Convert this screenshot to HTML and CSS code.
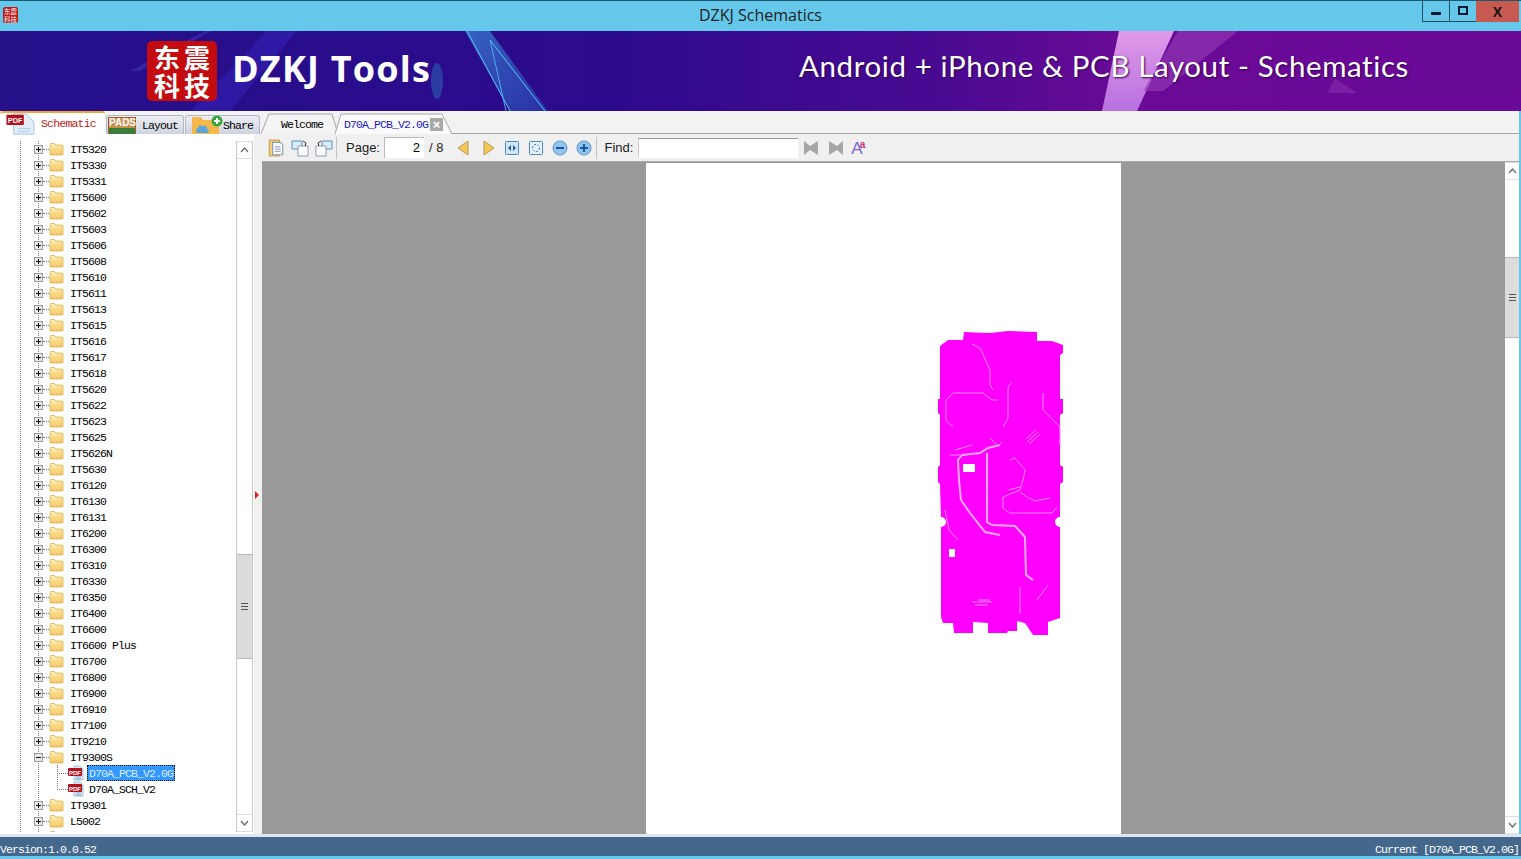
FILE: index.html
```html
<!DOCTYPE html>
<html>

<head>
    <title>DZKJ Schematics</title>
    <link rel="stylesheet" href="styles.css">
</head>

<body>
    <svg class="defs" width="0" height="0">
        <defs>
            <linearGradient id="gradFolder" x1="0" y1="0" x2="0" y2="1">
                <stop offset="0" stop-color="#fdeeb4" />
                <stop offset="1" stop-color="#f3c65e" />
            </linearGradient>
            <symbol id="folder" viewBox="0 0 15 14">
                <path d="M1 12.500V2.500q0-1 1-1h3.500l1.500 1.500h6q1 0 1 1v8.500q0 .5-1 .5H2q-1 0-1-.5z" fill="url(#gradFolder)" stroke="#dcb055" stroke-width=".8" />
            </symbol>
            <symbol id="pdf" viewBox="0 0 16 16">
                <path d="M6 1h6l3 3v11H6z" fill="#dbe9f5" stroke="#8fb4d0" stroke-width=".8" />
                <path d="M8 12h5M8 14h5" stroke="#7fb0d8" />
                <rect x="0" y="3" width="14" height="8" rx="1" fill="#b3121d" />
                <text x="7" y="9.500" class="pdfTiny">PDF</text>
            </symbol>
            <symbol id="page" viewBox="0 0 16 16">
                <path d="M5 3h7l2 2v9H5z" fill="#fbfbfb" stroke="#8d9bb0" />
                <path d="M7 7h5M7 9h5M7 11h5" stroke="#9fb0c8" />
            </symbol>
        </defs>
    </svg>

    <div class="window">
        <div class="titlebar">
            <div class="appIcon">东震<br>科技</div>
            <div class="titleText">DZKJ Schematics</div>
            <div class="winButtons">
                <div class="winBtn"><span class="icoMin"></span></div>
                <div class="winBtn"><span class="icoMax"></span></div>
                <div class="winBtn winClose">X</div>
            </div>
        </div>

        <div class="banner">
            <svg class="bannerArt" viewBox="0 0 1521 80" preserveAspectRatio="none">
                <defs>
                    <linearGradient id="gradBanner" x1="0" y1="0" x2="1" y2="0">
                        <stop offset="0" stop-color="#25108a" />
                        <stop offset=".4" stop-color="#2c0a8c" />
                        <stop offset=".62" stop-color="#4a0a92" />
                        <stop offset=".74" stop-color="#6a0a96" />
                        <stop offset="1" stop-color="#6a0898" />
                    </linearGradient>
                    <linearGradient id="gradRibbon" x1="0" y1="0" x2="1" y2="1">
                        <stop offset="0" stop-color="#3a86d8" />
                        <stop offset="1" stop-color="#2a40b0" />
                    </linearGradient>
                    <linearGradient id="gradPink" x1="0" y1="0" x2="0" y2="1">
                        <stop offset="0" stop-color="#e09ae8" />
                        <stop offset="1" stop-color="#b870e0" />
                    </linearGradient>
                </defs>
                <rect width="1521" height="80" fill="url(#gradBanner)" />
                <path d="M190 80L267 0h30L230 80z" fill="#3420b4" opacity=".6" />
                <path d="M130 40L205 0h6L140 40z" fill="#4a40c0" opacity=".4" />
                <path d="M465 0h25l58 80h-38z" fill="url(#gradRibbon)" opacity=".7" />
                <path d="M467 0l43 80M490 9l55 71" stroke="#55c8ee" fill="none" />
                <path d="M490 9l16 71" stroke="#55a8ee" fill="none" />
                <ellipse cx="437" cy="50" rx="6" ry="18" fill="#2e9ad0" opacity=".35" />
                <path d="M1119 0h55l-37 80h-35z" fill="url(#gradPink)" />
                <path d="M1178 0h60l-75 60h-20z" fill="#9a3cb8" opacity=".6" />
                <path d="M1335 47l22 15h-30z" fill="#8a2cac" opacity=".6" />
            </svg>
            <div class="logo">
                <span>东</span><span>震</span><span>科</span><span>技</span>
            </div>
            <div class="brand">DZKJ Tools</div>
            <div class="tagline">Android + iPhone &amp; PCB Layout - Schematics</div>
        </div>

        <div class="main">
            <div class="leftPane">
                <div class="leftTabs">
                    <div class="leftTab leftTabActive">
                        <svg class="tabIcoPdf" viewBox="0 0 34 24" width="34" height="22">
                            <path d="M8 1h14l8 9v13H8z" fill="#e4eef8" stroke="#9fc0dc" />
                            <path d="M12 17h14M12 20h14" stroke="#a8cbe6" />
                            <rect x="0" y="2" width="19" height="11" rx="1" fill="#b3121d" />
                            <text x="9.500" y="11" class="pdfLabel">PDF</text>
                        </svg>
                        <span class="tabLabel">Schematic</span>
                    </div>
                    <div class="leftTab leftTabLayout">
                        <div class="padsIcon">PADS</div>
                        <span class="tabLabel">Layout</span>
                    </div>
                    <div class="leftTab leftTabShare">
                        <svg viewBox="0 0 32 20" width="32" height="20">
                            <path d="M1 19V3q0-1 1-1h8l2 3h16v14z" fill="#f6b84a" />
                            <path d="M6 18q-3-3 1-5 1-4 5-2 4-1 4 3 3 1 1 4z" fill="#5aa8e0" />
                            <circle cx="26" cy="6" r="5.500" fill="#3aa53a" />
                            <path d="M23 6h6M26 3v6" stroke="#fff" stroke-width="2" />
                        </svg>
                        <span class="tabLabel">Share</span>
                    </div>
                </div>

                <div class="leftBody">
                    <div class="tree">
                        <div class="treeList">
                            <div class="row"><i class="exp"></i><svg class="fold"><use href="#folder" /></svg><span class="lbl">IT5320</span></div>
                            <div class="row"><i class="exp"></i><svg class="fold"><use href="#folder" /></svg><span class="lbl">IT5330</span></div>
                            <div class="row"><i class="exp"></i><svg class="fold"><use href="#folder" /></svg><span class="lbl">IT5331</span></div>
                            <div class="row"><i class="exp"></i><svg class="fold"><use href="#folder" /></svg><span class="lbl">IT5600</span></div>
                            <div class="row"><i class="exp"></i><svg class="fold"><use href="#folder" /></svg><span class="lbl">IT5602</span></div>
                            <div class="row"><i class="exp"></i><svg class="fold"><use href="#folder" /></svg><span class="lbl">IT5603</span></div>
                            <div class="row"><i class="exp"></i><svg class="fold"><use href="#folder" /></svg><span class="lbl">IT5606</span></div>
                            <div class="row"><i class="exp"></i><svg class="fold"><use href="#folder" /></svg><span class="lbl">IT5608</span></div>
                            <div class="row"><i class="exp"></i><svg class="fold"><use href="#folder" /></svg><span class="lbl">IT5610</span></div>
                            <div class="row"><i class="exp"></i><svg class="fold"><use href="#folder" /></svg><span class="lbl">IT5611</span></div>
                            <div class="row"><i class="exp"></i><svg class="fold"><use href="#folder" /></svg><span class="lbl">IT5613</span></div>
                            <div class="row"><i class="exp"></i><svg class="fold"><use href="#folder" /></svg><span class="lbl">IT5615</span></div>
                            <div class="row"><i class="exp"></i><svg class="fold"><use href="#folder" /></svg><span class="lbl">IT5616</span></div>
                            <div class="row"><i class="exp"></i><svg class="fold"><use href="#folder" /></svg><span class="lbl">IT5617</span></div>
                            <div class="row"><i class="exp"></i><svg class="fold"><use href="#folder" /></svg><span class="lbl">IT5618</span></div>
                            <div class="row"><i class="exp"></i><svg class="fold"><use href="#folder" /></svg><span class="lbl">IT5620</span></div>
                            <div class="row"><i class="exp"></i><svg class="fold"><use href="#folder" /></svg><span class="lbl">IT5622</span></div>
                            <div class="row"><i class="exp"></i><svg class="fold"><use href="#folder" /></svg><span class="lbl">IT5623</span></div>
                            <div class="row"><i class="exp"></i><svg class="fold"><use href="#folder" /></svg><span class="lbl">IT5625</span></div>
                            <div class="row"><i class="exp"></i><svg class="fold"><use href="#folder" /></svg><span class="lbl">IT5626N</span></div>
                            <div class="row"><i class="exp"></i><svg class="fold"><use href="#folder" /></svg><span class="lbl">IT5630</span></div>
                            <div class="row"><i class="exp"></i><svg class="fold"><use href="#folder" /></svg><span class="lbl">IT6120</span></div>
                            <div class="row"><i class="exp"></i><svg class="fold"><use href="#folder" /></svg><span class="lbl">IT6130</span></div>
                            <div class="row"><i class="exp"></i><svg class="fold"><use href="#folder" /></svg><span class="lbl">IT6131</span></div>
                            <div class="row"><i class="exp"></i><svg class="fold"><use href="#folder" /></svg><span class="lbl">IT6200</span></div>
                            <div class="row"><i class="exp"></i><svg class="fold"><use href="#folder" /></svg><span class="lbl">IT6300</span></div>
                            <div class="row"><i class="exp"></i><svg class="fold"><use href="#folder" /></svg><span class="lbl">IT6310</span></div>
                            <div class="row"><i class="exp"></i><svg class="fold"><use href="#folder" /></svg><span class="lbl">IT6330</span></div>
                            <div class="row"><i class="exp"></i><svg class="fold"><use href="#folder" /></svg><span class="lbl">IT6350</span></div>
                            <div class="row"><i class="exp"></i><svg class="fold"><use href="#folder" /></svg><span class="lbl">IT6400</span></div>
                            <div class="row"><i class="exp"></i><svg class="fold"><use href="#folder" /></svg><span class="lbl">IT6600</span></div>
                            <div class="row"><i class="exp"></i><svg class="fold"><use href="#folder" /></svg><span class="lbl">IT6600 Plus</span></div>
                            <div class="row"><i class="exp"></i><svg class="fold"><use href="#folder" /></svg><span class="lbl">IT6700</span></div>
                            <div class="row"><i class="exp"></i><svg class="fold"><use href="#folder" /></svg><span class="lbl">IT6800</span></div>
                            <div class="row"><i class="exp"></i><svg class="fold"><use href="#folder" /></svg><span class="lbl">IT6900</span></div>
                            <div class="row"><i class="exp"></i><svg class="fold"><use href="#folder" /></svg><span class="lbl">IT6910</span></div>
                            <div class="row"><i class="exp"></i><svg class="fold"><use href="#folder" /></svg><span class="lbl">IT7100</span></div>
                            <div class="row"><i class="exp"></i><svg class="fold"><use href="#folder" /></svg><span class="lbl">IT9210</span></div>
                            <div class="row"><i class="exp expOpen"></i><svg class="fold"><use href="#folder" /></svg><span class="lbl">IT9300S</span></div>
                            <div class="row rowChild"><svg class="pdfIco"><use href="#pdf" /></svg><span class="lbl lblChild lblSelected">D70A_PCB_V2.0G</span></div>
                            <div class="row rowChild rowChildLast"><svg class="pdfIco"><use href="#pdf" /></svg><span class="lbl lblChild">D70A_SCH_V2</span></div>
                            <div class="row"><i class="exp"></i><svg class="fold"><use href="#folder" /></svg><span class="lbl">IT9301</span></div>
                            <div class="row"><i class="exp"></i><svg class="fold"><use href="#folder" /></svg><span class="lbl">L5002</span></div>
                            <div class="row"><i class="exp"></i><svg class="fold"><use href="#folder" /></svg></div>
                        </div>
                        <div class="scrollbar treeScroll">
                            <div class="sbBtn"><svg width="9" height="6" viewBox="0 0 9 6"><path d="M1 5l3.500-4L8 5" class="sbArrow" /></svg></div>
                            <div class="sbTrack">
                                <div class="sbThumb treeThumb"><span class="grip"></span></div>
                            </div>
                            <div class="sbBtn"><svg width="9" height="6" viewBox="0 0 9 6"><path d="M1 1l3.500 4L8 1" class="sbArrow" /></svg></div>
                        </div>
                    </div>
                    <div class="splitter"><span class="splitArrow"></span></div>
                </div>
            </div>

            <div class="rightPane">
                <div class="docTabs">
                    <div class="docTab docTabWelcome">
                        <svg class="tabShape" viewBox="0 0 78 21" preserveAspectRatio="none">
                            <path d="M0 21L8 1h63l6 20" fill="#f4f4f4" stroke="#a6a6a6" />
                        </svg>
                        <span>Welcome</span>
                    </div>
                    <div class="docTab docTabActive">
                        <svg class="tabShape" viewBox="0 0 118 21" preserveAspectRatio="none">
                            <path d="M0 21L6 1h101l10 20" fill="#fafafa" stroke="#a6a6a6" />
                        </svg>
                        <span>D70A_PCB_V2.0G</span>
                        <span class="docClose">×</span>
                    </div>
                </div>

                <div class="toolbar">
                    <svg class="tool" viewBox="0 0 16 16"><rect x="2" y="1" width="9" height="14" fill="#f0cf80" stroke="#c9a050" /><use href="#page" /></svg>
                    <svg class="tool" viewBox="0 0 18 18"><path d="M1 2h10v8H1z" fill="#d8ecfb" stroke="#5d8fb8" /><path d="M7 7h10v10H7z" fill="#fff" stroke="#8d9bb0" /><path d="M12 2l3 2-1 3" fill="none" stroke="#333" /></svg>
                    <svg class="tool" viewBox="0 0 18 18"><path d="M7 2h10v8H7z" fill="#d8ecfb" stroke="#5d8fb8" /><path d="M1 7h10v10H1z" fill="#fff" stroke="#8d9bb0" /><path d="M6 2L3 4l1 3" fill="none" stroke="#333" /></svg>
                    <span class="toolSep sepFirst"></span>
                    <span class="toolText pageLabel">Page:</span>
                    <div class="pageInput">2</div>
                    <span class="toolText pageTotal">/ 8</span>
                    <svg class="navTri triPrev" viewBox="0 0 14 16"><path d="M12 1v14L2 8z" fill="#f3c456" stroke="#b59a50" /></svg>
                    <svg class="navTri triNext" viewBox="0 0 14 16"><path d="M2 1v14l10-7z" fill="#f3c456" stroke="#b59a50" /></svg>
                    <svg class="tool toolFit" viewBox="0 0 14 14"><rect x=".5" y=".5" width="13" height="13" rx="1" fill="#cfe6fa" stroke="#4a86c0" /><path d="M6 4v6L3 7zM8 4v6l3-3z" fill="#1f5f9f" /></svg>
                    <svg class="tool toolFit" viewBox="0 0 14 14"><rect x=".5" y=".5" width="13" height="13" rx="1" fill="#e6f2fc" stroke="#4a86c0" /><circle cx="7" cy="7" r="3.500" fill="none" stroke="#3a7ab5" stroke-dasharray="2 1.500" /></svg>
                    <svg class="tool toolZoom" viewBox="0 0 16 16"><circle cx="8" cy="8" r="7" fill="#8ec4ee" stroke="#5a90c0" /><path d="M4 8h8" stroke="#1f5590" stroke-width="2" /></svg>
                    <svg class="tool toolZoom" viewBox="0 0 16 16"><circle cx="8" cy="8" r="7" fill="#8ec4ee" stroke="#5a90c0" /><path d="M4 8h8M8 4v8" stroke="#1f5590" stroke-width="2" /></svg>
                    <span class="toolSep sepSecond"></span>
                    <span class="toolText findLabel">Find:</span>
                    <div class="findInput"></div>
                    <svg class="tool toolFindPrev" viewBox="0 0 16 16"><path d="M1 1l6 5 8-5v14l-8-5-6 5z" fill="#a6a6a6" /></svg>
                    <svg class="tool toolFindNext" viewBox="0 0 16 16"><path d="M15 1l-6 5-8-5v14l8-5 6 5z" fill="#a6a6a6" /></svg>
                    <div class="fontIcon"><span class="fontBig">A</span><span class="fontSmall">a</span></div>
                </div>

                <div class="viewer">
                    <div class="canvas">
                        <div class="pdfPage">
                            <svg class="pcb" viewBox="646 163 475 671">
                                <path class="pcbBody" d="M964 332L990 333L1008 331L1037 332L1037 341L1052 341L1063 345L1063 353L1060 355L1060 399L1063 399L1063 413L1060 415L1060 465L1063 467L1063 482L1060 484L1060 517A5 5 0 0 0 1060 527L1060 618L1048 622L1048 635L1033 635L1025 623L1017 621L1017 631L1008 631L1007 633L988 633L988 623L973 622L973 633L954 633L953 623L943 623L941 617L941 527A5 5 0 0 0 941 517L940 484L938 482L938 467L940 465L940 415L938 413L938 399L940 399L940 346L948 340L963 340z" />
                                <rect class="pcbHole" x="963" y="464" width="12" height="8" />
                                <rect class="pcbHole" x="949" y="549" width="6" height="8" />
                                <path class="traceWide" d="M1000 445L988 448L980 453L962 455L958 460L959 480L961 500L970 513L985 532L1000 535" />
                                <path class="traceWide" d="M987 453V522L992 525L1015 526L1025 537L1026 575L1033 580" />
                                <path class="traceThin" d="M998 400H992L983 393H953L946 400V420L950 425L953 426" />
                                <path class="traceThin" d="M972 344L980 348L990 370V385L993 390" />
                                <path class="traceThin" d="M1012 382L1008 387V418L1003 427" />
                                <path class="traceThin" d="M1043 393V410L1060 427V445" />
                                <path class="traceThin" d="M1027 442L1038 432M1029 444L1040 434M1026 439L1036 430" />
                                <path class="traceThin" d="M1010 460L1015 458L1025 470L1023 480L1020 490L1003 497V508L1010 513H1052L1057 507" />
                                <path class="traceThin" d="M1027 497L1035 501L1050 498M1008 490L1020 487M1020 492L1027 497" />
                                <path class="traceThin" d="M960 455H950M955 450L972 445M945 510L949 530L958 540" />
                                <path class="traceThin" d="M972 602H992M978 600H990M975 605H988" />
                                <path class="traceThin" d="M1020 587V613M1037 600L1048 585" />
                                <path class="traceThin" d="M990 438L998 446L1002 442" />
                            </svg>
                        </div>
                    </div>
                    <div class="scrollbar viewerScroll">
                        <div class="sbBtn"><svg width="9" height="6" viewBox="0 0 9 6"><path d="M1 5l3.500-4L8 5" class="sbArrow" /></svg></div>
                        <div class="sbTrack">
                            <div class="sbThumb viewerThumb"><span class="grip"></span></div>
                        </div>
                        <div class="sbBtn"><svg width="9" height="6" viewBox="0 0 9 6"><path d="M1 1l3.500 4L8 1" class="sbArrow" /></svg></div>
                    </div>
                </div>
            </div>
        </div>

        <div class="statusbar">
            <span>Version:1.0.0.52</span>
            <span>Current [D70A_PCB_V2.0G]</span>
        </div>
    </div>
</body>

</html>
```
FILE: styles.css
```css
html,
body {
    margin: 0;
    padding: 0;
}

body {
    width: 1521px;
    height: 859px;
    overflow: hidden;
    font-family: "Liberation Mono", monospace;
    font-size: 11.500px;
    letter-spacing: -0.9px;
    color: #000;
}

.defs {
    position: absolute;
}

.window {
    display: flex;
    flex-direction: column;
    height: 859px;
    background-color: #65c8ea;
}

/* title */

.titlebar {
    display: grid;
    grid-template-columns: 1fr auto 1fr;
    height: 31px;
    box-sizing: border-box;
    border-top: 1px solid #1d5a72;
    flex-shrink: 0;
}

.appIcon {
    width: 15px;
    height: 16px;
    margin: 6px 0 0 3px;
    background-color: #b81818;
    border-radius: 2px;
    color: #fff;
    font-family: "Noto Sans CJK SC", sans-serif;
    font-size: 6.500px;
    line-height: 8px;
    letter-spacing: 0;
    text-align: center;
}

.titleText {
    font-family: "Open Sans", sans-serif;
    font-size: 16px;
    line-height: 29px;
    letter-spacing: 0;
    color: #222;
}

.winButtons {
    display: flex;
    justify-content: flex-end;
    height: 21px;
    padding-right: 2px;
}

.winBtn {
    display: flex;
    align-items: center;
    justify-content: center;
    width: 26px;
    height: 20px;
    border-left: 1px solid #1f4f66;
    border-bottom: 1px solid #1f4f66;
}

.winClose {
    width: 43px;
    border-left: 0;
    border-bottom: 0;
    height: 21px;
    background-color: #c75a50;
    font-family: "Liberation Sans", sans-serif;
    font-weight: bold;
    font-size: 14px;
    letter-spacing: 0;
    color: #111;
}

.icoMin {
    width: 10px;
    height: 3px;
    margin-top: 4px;
    background-color: #0a1a30;
}

.icoMax {
    width: 6px;
    height: 5px;
    margin-bottom: 2px;
    border: 2px solid #0a1a30;
}

/* banner */

.banner {
    position: relative;
    display: flex;
    align-items: center;
    height: 80px;
    flex-shrink: 0;
    overflow: hidden;
    letter-spacing: 0;
}

.bannerArt {
    position: absolute;
    left: 0;
    top: 0;
    width: 1521px;
    height: 80px;
}

.logo {
    position: relative;
    display: grid;
    grid-template-columns: 30px 30px;
    grid-auto-rows: 28px;
    align-items: center;
    width: 60px;
    height: 56px;
    margin-left: 147px;
    padding: 2px 5px 2px;
    background-color: #c40c10;
    border-radius: 5px;
    color: #fff;
    font-family: "Noto Sans CJK SC", sans-serif;
    font-weight: bold;
    font-size: 26px;
    line-height: 28px;
    text-align: center;
}

.brand {
    position: relative;
    margin-left: 15px;
    margin-bottom: 6px;
    font-family: "Open Sans", sans-serif;
    font-weight: bold;
    font-size: 36px;
    letter-spacing: 1.2px;
    color: #fff;
}

.tagline {
    position: relative;
    margin-left: auto;
    margin-right: 112px;
    margin-bottom: 12px;
    font-family: "Lato", sans-serif;
    font-size: 29.500px;
    letter-spacing: 0.6px;
    color: #fff;
    text-shadow: 1px 1px 2px #2a0050;
}

/* main area */

.main {
    display: flex;
    height: 723px;
    margin-right: 2px;
    background-color: #f0f0f0;
    flex-shrink: 0;
}

.leftPane {
    display: flex;
    flex-direction: column;
    width: 262px;
    flex-shrink: 0;
    background-color: #fff;
}

.leftTabs {
    display: flex;
    align-items: flex-end;
    height: 23px;
    background-color: #f2f2f2;
    flex-shrink: 0;
}

.leftTab {
    display: flex;
    align-items: center;
    box-sizing: border-box;
    height: 19px;
    background: linear-gradient(#eceef4, #cfd3de);
    border: 1px solid #b4b8c4;
    border-bottom: 0;
    border-radius: 3px 3px 0 0;
}

.leftTabActive {
    width: 105px;
    height: 23px;
    padding-left: 5px;
    background: #fff;
    border: 0;
    border-top: 2px solid #f2a93b;
    color: #c01818;
}

.leftTabActive .tabLabel {
    margin-left: 2px;
    letter-spacing: -0.8px;
}

.tabIcoPdf {
    align-self: flex-start;
}

.pdfLabel {
    fill: #fff;
    font-family: "Liberation Sans", sans-serif;
    font-weight: bold;
    font-size: 8px;
    letter-spacing: 0;
    text-anchor: middle;
}

.pdfTiny {
    fill: #fff;
    font-family: "Liberation Sans", sans-serif;
    font-weight: bold;
    font-size: 6px;
    letter-spacing: 0;
    text-anchor: middle;
}

.leftTabLayout {
    width: 78px;
    margin-left: 1px;
}

.padsIcon {
    width: 28px;
    height: 17px;
    margin: 0 6px 0 1px;
    box-sizing: border-box;
    border: 1px solid #a85a20;
    border-bottom: 0;
    background: linear-gradient(#c89050 0 60%, #3a7a3a 60%);
    color: #fff;
    font-family: "Liberation Sans", sans-serif;
    font-weight: bold;
    font-size: 10px;
    line-height: 10px;
    letter-spacing: 0;
    text-align: center;
}

.leftTabShare {
    width: 75px;
    margin-left: 1px;
    padding-left: 5px;
}

.leftBody {
    display: flex;
    flex: 1;
    min-height: 0;
}

.tree {
    display: flex;
    width: 254px;
    padding-top: 7px;
    box-sizing: border-box;
    height: 700px;
}

.treeList {
    width: 236px;
    height: 691px;
    overflow: hidden;
    background:
        repeating-linear-gradient(to bottom, #777 0 1px, transparent 1px 2px) 20px 0 / 1px 100% no-repeat,
        repeating-linear-gradient(to bottom, #777 0 1px, transparent 1px 2px) 38px 0 / 1px 100% no-repeat;
    background-color: #fff;
}

.row {
    position: relative;
    display: flex;
    align-items: center;
    height: 16px;
}

.exp {
    position: relative;
    display: block;
    box-sizing: border-box;
    width: 9px;
    height: 9px;
    margin-left: 34px;
    background: linear-gradient(#111, #111) center / 5px 1px no-repeat,
        linear-gradient(#111, #111) center / 1px 5px no-repeat,
        #e8e8e8;
    border: 1px solid #9a9a9a;
}

.expOpen {
    background: linear-gradient(#111, #111) center / 5px 1px no-repeat, #e8e8e8;
}

.exp::after {
    content: "";
    position: absolute;
    left: 8px;
    top: 3px;
    width: 6px;
    border-top: 1px dotted #777;
}

.fold {
    width: 15px;
    height: 14px;
    margin-left: 6px;
}

.lbl {
    margin-left: 6px;
    margin-top: 2px;
    line-height: 14px;
    white-space: pre;
}

.rowChild {
    padding-left: 68px;
    background:
        repeating-linear-gradient(to bottom, #777 0 1px, transparent 1px 2px) 57px 0 / 1px 100% no-repeat,
        repeating-linear-gradient(to right, #777 0 1px, transparent 1px 2px) 57px 8px / 11px 1px no-repeat;
}

.rowChildLast {
    background:
        repeating-linear-gradient(to bottom, #777 0 1px, transparent 1px 2px) 57px 0 / 1px 9px no-repeat,
        repeating-linear-gradient(to right, #777 0 1px, transparent 1px 2px) 57px 8px / 11px 1px no-repeat;
}

.pdfIco {
    width: 16px;
    height: 16px;
}

.lblChild {
    margin-left: 3px;
    margin-top: 0;
    padding: 1px 1px 0;
    line-height: 13px;
    border: 1px solid transparent;
}

.lblSelected {
    background-color: #3399ff;
    border: 1px dotted #111;
    color: #d8eaff;
}

/* scrollbars */

.scrollbar {
    display: flex;
    flex-direction: column;
    background-color: #fff;
}

.treeScroll {
    width: 17px;
    height: 691px;
    border-left: 1px solid #c8c8c8;
    border-right: 1px solid #c8c8c8;
    box-sizing: border-box;
}

.viewerScroll {
    flex: 1;
}

.sbBtn {
    display: flex;
    align-items: center;
    justify-content: center;
    height: 16px;
    flex-shrink: 0;
    border-top: 1px solid #ddd;
    border-bottom: 1px solid #ddd;
}

.sbArrow {
    fill: none;
    stroke: #666;
    stroke-width: 1.200;
}

.sbTrack {
    flex: 1;
}

.sbThumb {
    display: flex;
    align-items: center;
    justify-content: center;
    background-color: #dcdcdc;
    border-top: 1px solid #b8b8b8;
    border-bottom: 1px solid #b8b8b8;
}

.treeThumb {
    height: 103px;
    margin-top: 395px;
}

.viewerThumb {
    height: 79px;
    margin-top: 77px;
}

.grip {
    width: 7px;
    height: 7px;
    background: repeating-linear-gradient(to bottom, #555 0 1px, #dcdcdc 1px 3px);
}

.splitter {
    display: flex;
    align-items: center;
    width: 8px;
    background-color: #f0f0f0;
    padding-top: 22px;
    box-sizing: border-box;
    height: 700px;
}

.splitArrow {
    width: 0;
    height: 0;
    margin-left: 1px;
    border-left: 4px solid #e02020;
    border-top: 4px solid transparent;
    border-bottom: 4px solid transparent;
}

/* right side */

.rightPane {
    display: flex;
    flex-direction: column;
    flex: 1;
    min-width: 0;
}

.docTabs {
    display: flex;
    align-items: flex-end;
    height: 23px;
    box-sizing: border-box;
    margin-left: -1px;
    border-bottom: 1px solid #a6a6a6;
    background-color: #f2f2f2;
    flex-shrink: 0;
}

.docTab {
    position: relative;
    display: flex;
    align-items: center;
    justify-content: center;
    height: 21px;
    margin-bottom: -1px;
    padding-top: 1px;
    box-sizing: border-box;
}

.docTab span {
    position: relative;
}

.tabShape {
    position: absolute;
    left: 0;
    top: 0;
    width: 100%;
    height: 100%;
}

.docTabWelcome {
    width: 78px;
    padding-left: 4px;
}

.docTabActive {
    width: 118px;
    margin-left: -4px;
    justify-content: flex-start;
    padding-left: 9px;
    color: #1a1ac8;
}

.docClose {
    width: 13px;
    height: 13px;
    margin-left: 2px;
    background-color: #a8a8a8;
    color: #fff;
    font-family: "Liberation Sans", sans-serif;
    font-weight: bold;
    font-size: 13px;
    line-height: 13px;
    letter-spacing: 0;
    text-align: center;
}

.toolbar {
    display: flex;
    align-items: center;
    height: 27px;
    padding-left: 5px;
    box-sizing: border-box;
    background-color: #f0f0f0;
    flex-shrink: 0;
    font-family: "Liberation Sans", sans-serif;
    letter-spacing: 0;
}

.tool {
    width: 18px;
    height: 18px;
    margin-right: 6px;
    flex-shrink: 0;
}

.toolSep {
    width: 1px;
    height: 22px;
    background-color: #c4c4c4;
}

.sepFirst {
    margin: 0 9px 0 -3px;
}

.sepSecond {
    margin: 0 7px 0 -3px;
}

.toolText {
    font-size: 13px;
    color: #222;
}

.pageInput {
    width: 35px;
    height: 20px;
    margin-left: 4px;
    padding-right: 4px;
    background-color: #fff;
    border-left: 1px solid #bbb;
    border-top: 1px solid #bbb;
    font-size: 13px;
    line-height: 20px;
    text-align: right;
}

.pageTotal {
    margin-left: 5px;
}

.navTri {
    width: 14px;
    height: 16px;
    margin-left: 12px;
}

.triPrev {
    margin-left: 13px;
}

.triNext {
    margin-left: 12px;
    margin-right: 7px;
}

.toolFit {
    width: 14px;
    height: 14px;
    margin-left: 2px;
    margin-right: 8px;
}

.toolZoom {
    width: 16px;
    height: 16px;
    margin-left: 1px;
    margin-right: 7px;
}

.findLabel {
    margin-right: 5px;
}

.findInput {
    width: 159px;
    height: 19px;
    background-color: #fff;
    border-top: 1px solid #999;
    border-left: 1px solid #ccc;
}

.toolFindPrev {
    width: 16px;
    height: 16px;
    margin-left: 5px;
    margin-right: 9px;
}

.toolFindNext {
    width: 16px;
    height: 16px;
    margin-right: 7px;
}

.fontIcon {
    margin-top: 3px;
    font-family: "Liberation Sans", sans-serif;
    color: #7a68d8;
    font-size: 17px;
    line-height: 17px;
}

.fontSmall {
    position: relative;
    top: -6px;
    margin-left: -3px;
    font-weight: bold;
    font-size: 10px;
    color: #d03080;
}

.viewer {
    display: flex;
    flex: 1;
    min-height: 0;
    border-top: 1px solid #aaa;
}

.canvas {
    display: flex;
    justify-content: center;
    width: 1243px;
    flex-shrink: 0;
    padding-top: 1px;
    box-sizing: border-box;
    background-color: #999;
    overflow: hidden;
}

.pdfPage {
    width: 475px;
    height: 671px;
    background-color: #fff;
}

.pcb {
    display: block;
    width: 475px;
    height: 671px;
}

.pcbBody {
    fill: #ff00ff;
}

.pcbHole {
    fill: #fff;
}

.traceWide,
.traceThin {
    fill: none;
}

.traceWide {
    stroke: #ffaaff;
    stroke-width: 2;
}

.traceThin {
    stroke: #ff88ff;
    stroke-width: 1;
}

/* bottom */

.statusbar {
    display: flex;
    justify-content: space-between;
    height: 19px;
    margin-top: 3px;
    padding-right: 2px;
    background-color: #44688c;
    color: #fff;
    line-height: 26px;
    flex-shrink: 0;
    overflow: hidden;
    box-shadow: 0 -3px 0 #dfe5ec;
}
```
